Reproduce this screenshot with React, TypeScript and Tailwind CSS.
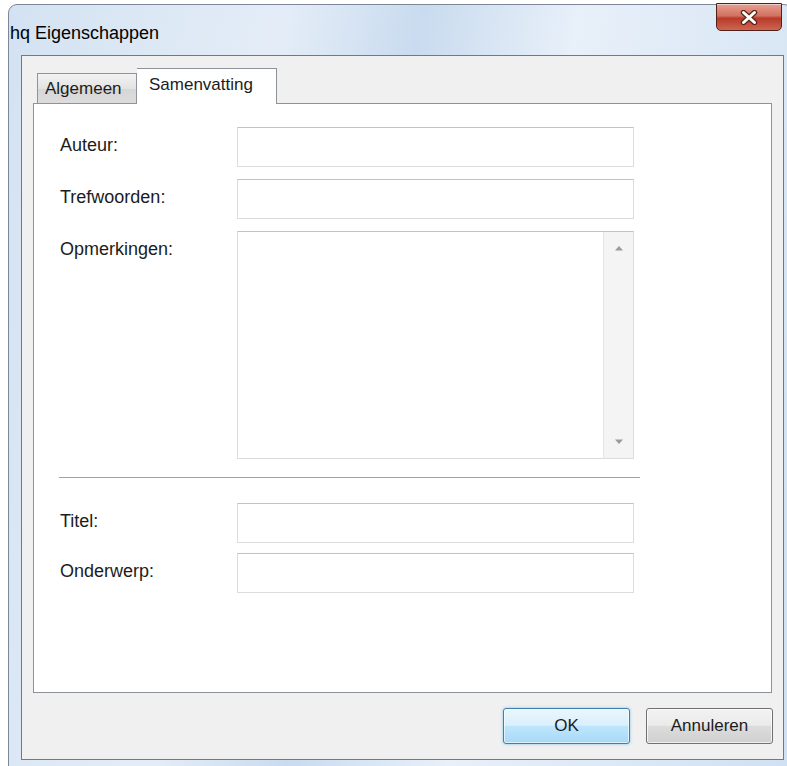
import React from 'react';

// --- small pieces of the Vista chrome ---
function CloseGlyph() {
  return (
    <svg width="18" height="15" viewBox="0 0 18 15">
      <path d="M3.5 2.5 L14.5 12.5 M14.5 2.5 L3.5 12.5" stroke="#5a2418" strokeWidth="5.4" strokeLinecap="round" />
      <path d="M3.5 2.5 L14.5 12.5 M14.5 2.5 L3.5 12.5" stroke="#ffffff" strokeWidth="3" strokeLinecap="round" />
    </svg>
  );
}

function Arrow({ up }: { up?: boolean }) {
  return (
    <svg width="10" height="6" viewBox="0 0 10 6">
      <path d={up ? 'M1 5.5 L5 1 L9 5.5 Z' : 'M1 0.5 L5 5 L9 0.5 Z'} fill="#9a9a9a" />
    </svg>
  );
}

function Field({ label }: { label: string }) {
  return (
    <>
      <div className="pt-[8px] leading-[20px]">{label}</div>
      <div className="h-[40px] border border-[#dcdcdc] border-t-[#c2c2c2] bg-white" />
    </>
  );
}

export default function App() {
  return (
    <div
      className="w-[787px] h-[766px] overflow-hidden bg-white text-[18px] text-[#1c1c1c]"
      style={{ fontFamily: '"Liberation Sans", Arial, sans-serif' }}
    >
      {/* window frame */}
      <div className="ml-[8px] mt-[4px] w-[785px] h-[790px] rounded-t-[9px] border border-[#7c8898] bg-[linear-gradient(100deg,#d3e2f2_0%,#e4edf7_30%,#c9dbef_45%,#e8f0f9_62%,#cfe0f2_100%)] px-[12px]">
        {/* title bar */}
        <div className="h-[50px] flex items-start justify-between">
          <div className="pt-[18px] -ml-[11px] leading-[21px] text-[18px] text-black">hq Eigenschappen</div>
          <div className="mt-[-2px] -mr-[2px] w-[66px] h-[28px] flex items-center justify-center rounded-b-[5px] border border-[#4e221b] bg-[linear-gradient(180deg,#e6a091_0%,#d27262_45%,#b93a28_55%,#cc6652_100%)] shadow-[inset_0_1px_0_rgba(255,255,255,0.5)]">
            <CloseGlyph />
          </div>
        </div>

        {/* client area */}
        <div className="w-[763px] h-[705px] border border-[#6d7a8a] bg-[#f0f0f0] px-[11px] pt-[12px]">
          {/* tabs */}
          <div className="h-[35px] flex items-end pl-[4px]">
            <div className="w-[100px] h-[30px] border border-b-0 border-[#8e9299] bg-[linear-gradient(180deg,#f2f2f2_0%,#e3e3e3_50%,#d6d6d6_51%,#dcdcdc_100%)] pl-[7px] leading-[29px] text-[17px]">
              Algemeen
            </div>
            <div className="relative z-10 -mb-px w-[140px] h-[36px] border border-b-0 border-l-0 border-[#8e9299] bg-white pl-[12px] pt-[3px] leading-[26px] text-[17px]">
              Samenvatting
            </div>
          </div>

          {/* tab page */}
          <div className="h-[590px] border border-[#8e9299] bg-white pl-[26px] pt-[23px]">
            <div className="grid grid-cols-[177px_397px] gap-y-[12px]">
              <Field label="Auteur:" />
              <Field label="Trefwoorden:" />
              <div className="pt-[8px] leading-[20px]">Opmerkingen:</div>
              <div className="h-[228px] border border-[#dcdcdc] border-t-[#c2c2c2] bg-white flex justify-end">
                <div className="w-[30px] h-full bg-[#f4f4f4] border-l border-[#e4e4e4] flex flex-col items-center justify-between py-[13px]">
                  <Arrow up />
                  <Arrow />
                </div>
              </div>
            </div>

            <div className="mt-[18px] -ml-px w-[581px] h-[2px] border-t border-[#a0a0a0] border-b border-b-white" />

            <div className="mt-[24px] grid grid-cols-[177px_397px] gap-y-[10px]">
              <Field label="Titel:" />
              <Field label="Onderwerp:" />
            </div>
          </div>

          {/* dialog buttons */}
          <div className="mt-[15px] -mr-px flex justify-end gap-[16px]">
            <button className="w-[127px] h-[36px] rounded-[3px] border border-[#3c7fb1] bg-[linear-gradient(180deg,#eaf6fd_0%,#d9f0fc_48%,#bee6fd_50%,#a7d9f5_100%)] shadow-[0_0_3px_#7ec3ea,inset_0_0_0_1px_rgba(255,255,255,0.6)] text-[17px]">
              OK
            </button>
            <button className="w-[127px] h-[36px] rounded-[3px] border border-[#707070] bg-[linear-gradient(180deg,#f2f2f2_0%,#ebebeb_48%,#dddddd_50%,#cfcfcf_100%)] shadow-[inset_0_0_0_1px_rgba(255,255,255,0.7)] text-[17px]">
              Annuleren
            </button>
          </div>
        </div>
      </div>
    </div>
  );
}
